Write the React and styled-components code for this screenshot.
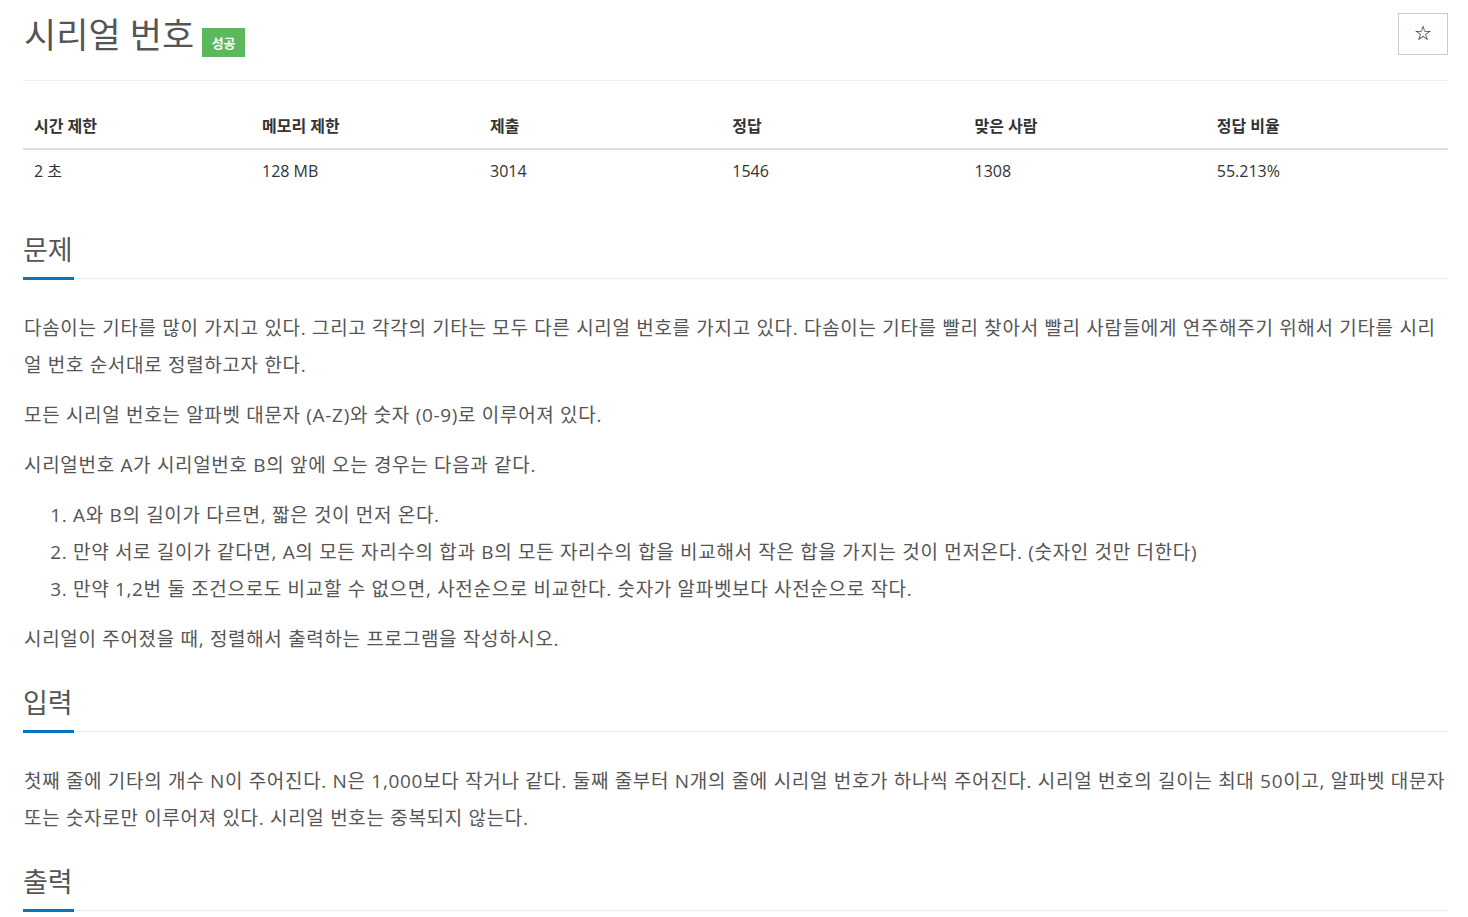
import styled, { createGlobalStyle } from 'styled-components';

const GlobalStyle = createGlobalStyle`
    body {
        margin: 0;
        background: #fff;
        font-family: 'Open Sans', 'Noto Sans CJK KR', sans-serif;
        color: #555;
    }
`;

const Page = styled.div`
    padding: 0 20px 0 23px;
`;

const Header = styled.div`
    display: flex;
    justify-content: space-between;
    align-items: flex-start;
    padding-top: 13px;
    padding-bottom: 23px;
    border-bottom: 1px solid #eee;
`;

const TitleWrap = styled.div`
    display: flex;
    align-items: flex-end;
    gap: 8px;
`;

const Title = styled.h1`
    margin: 0;
    font-size: 35px;
    line-height: 44px;
    font-weight: 400;
    color: #555;
    padding-left: 1px;
`;

const Badge = styled.span`
    display: inline-flex;
    align-items: center;
    justify-content: center;
    width: 43px;
    height: 29px;
    background: #5cb85c;
    color: #fff;
    font-size: 13px;
    font-weight: 700;
`;

const StarButton = styled.button`
    width: 50px;
    height: 42px;
    border: 1px solid #ccc;
    background: #fff;
    font-size: 20px;
    color: #000;
    padding: 0 0 3px;
    font-family: 'DejaVu Sans', sans-serif;
    cursor: pointer;
`;

const Table = styled.div`
    margin-top: 23px;
    margin-bottom: 40px;
`;

const Row = styled.div`
    display: grid;
    grid-template-columns: 16% 16% 17% 17% 17% 17%;
    border-bottom: ${(p) => (p.$head ? '2px solid #ddd' : 'none')};
`;

const Cell = styled.div`
    padding: ${(p) => (p.$head ? '12px 11px 12px' : '10px 11px')};
    font-size: 16px;
    line-height: ${(p) => (p.$head ? '20px' : '22px')};
    font-weight: ${(p) => (p.$head ? 700 : 400)};
    color: #333;
`;

const Section = styled.section`
    margin-bottom: 27px;
`;

const SectionHead = styled.div`
    border-bottom: 1px dotted #ddd;
    margin-bottom: 31px;
`;

const SectionTitle = styled.h2`
    display: inline-block;
    margin: 0 0 -2px;
    padding: 0 1px 9px 0;
    font-size: 27px;
    line-height: 36px;
    font-weight: 400;
    color: #555;
    border-bottom: 3px solid #0076c0;
`;

const Text = styled.p`
    margin: 0 0 13px;
    padding-left: 1px;
    font-size: 19px;
    line-height: 37px;
    color: #555;
    letter-spacing: 0.68px;
`;

const List = styled.ol`
    margin: 0 0 13px;
    padding-left: 50px;
    font-size: 19px;
    line-height: 37px;
    color: #555;
    letter-spacing: 0.68px;
`;

const stats = [
    ['시간 제한', '2 초'],
    ['메모리 제한', '128 MB'],
    ['제출', '3014'],
    ['정답', '1546'],
    ['맞은 사람', '1308'],
    ['정답 비율', '55.213%'],
];

function SectionBlock({ title, children }) {
    return (
        <Section>
            <SectionHead>
                <SectionTitle>{title}</SectionTitle>
            </SectionHead>
            {children}
        </Section>
    );
}

export default function App() {
    return (
        <Page>
            <GlobalStyle />
            <Header>
                <TitleWrap>
                    <Title>시리얼 번호</Title>
                    <Badge>성공</Badge>
                </TitleWrap>
                <StarButton>☆</StarButton>
            </Header>

            <Table>
                <Row $head>
                    {stats.map(([h]) => (
                        <Cell $head key={h}>{h}</Cell>
                    ))}
                </Row>
                <Row>
                    {stats.map(([h, v]) => (
                        <Cell key={h}>{v}</Cell>
                    ))}
                </Row>
            </Table>

            <SectionBlock title="문제">
                <Text>
                    다솜이는 기타를 많이 가지고 있다. 그리고 각각의 기타는 모두 다른 시리얼 번호를 가지고 있다. 다솜이는 기타를 빨리 찾아서 빨리 사람들에게 연주해주기 위해서 기타를 시리얼 번호 순서대로 정렬하고자 한다.
                </Text>
                <Text>모든 시리얼 번호는 알파벳 대문자 (A-Z)와 숫자 (0-9)로 이루어져 있다.</Text>
                <Text>시리얼번호 A가 시리얼번호 B의 앞에 오는 경우는 다음과 같다.</Text>
                <List>
                    <li>A와 B의 길이가 다르면, 짧은 것이 먼저 온다.</li>
                    <li>만약 서로 길이가 같다면, A의 모든 자리수의 합과 B의 모든 자리수의 합을 비교해서 작은 합을 가지는 것이 먼저온다. (숫자인 것만 더한다)</li>
                    <li>만약 1,2번 둘 조건으로도 비교할 수 없으면, 사전순으로 비교한다. 숫자가 알파벳보다 사전순으로 작다.</li>
                </List>
                <Text>시리얼이 주어졌을 때, 정렬해서 출력하는 프로그램을 작성하시오.</Text>
            </SectionBlock>

            <SectionBlock title="입력">
                <Text>
                    첫째 줄에 기타의 개수 N이 주어진다. N은 1,000보다 작거나 같다. 둘째 줄부터 N개의 줄에 시리얼 번호가 하나씩 주어진다. 시리얼 번호의 길이는 최대 50이고, 알파벳 대문자 또는 숫자로만 이루어져 있다. 시리얼 번호는 중복되지 않는다.
                </Text>
            </SectionBlock>

            <SectionBlock title="출력">
                <Text>시리얼 번호를 정렬해서 출력한다.</Text>
            </SectionBlock>
        </Page>
    );
}
